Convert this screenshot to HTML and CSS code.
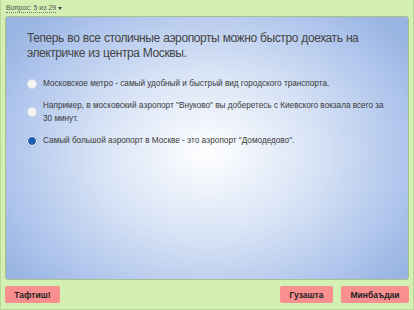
FILE: index.html
```html
<!DOCTYPE html>
<html lang="ru">
<head>
<meta charset="utf-8">
<link rel="stylesheet" href="styles.css">
</head>
<body>
<div class="app">
  <div class="topbar"><span class="qnum">Вопрос: 5 из 29</span><span class="caret"></span></div>
  <div class="panel">
    <div class="question">Теперь во все столичные аэропорты можно быстро доехать на электричке из центра Москвы.</div>
    <div class="options">
      <div class="option"><span class="radio"></span><span class="otext">Московское метро - самый удобный и быстрый вид городского транспорта.</span></div>
      <div class="option"><span class="radio"></span><span class="otext">Например, в московский аэропорт "Внуково" вы доберетесь с Киевского вокзала всего за 30 минут.</span></div>
      <div class="option"><span class="radio checked"></span><span class="otext">Самый большой аэропорт в Москве - это аэропорт "Домодедово".</span></div>
    </div>
  </div>
  <div class="footer">
    <button class="btn btn-check">Тафтиш!</button>
    <div class="spacer"></div>
    <button class="btn btn-prev">Гузашта</button>
    <button class="btn btn-next">Минбаъдаи</button>
  </div>
</div>
</body>
</html>
```

FILE: styles.css
```css
html, body {
  margin: 0;
  padding: 0;
}
body {
  width: 414px;
  height: 310px;
  background: #d3efb2;
  font-family: "Liberation Sans", Arial, sans-serif;
  overflow: hidden;
}
.app {
  box-sizing: border-box;
  width: 414px;
  height: 310px;
  border: 1px solid #b9d99a;
  border-top: none;
  display: flex;
  flex-direction: column;
  padding: 0 4px 0 4px;
}
.topbar {
  height: 16px;
  display: flex;
  align-items: center;
  font-size: 7px;
  color: #555;
  padding-left: 1px;
  gap: 2px;
}
.qnum {
  border-bottom: 1px dotted #777;
  line-height: 8px;
}
.caret {
  width: 0;
  height: 0;
  border-left: 2px solid transparent;
  border-right: 2px solid transparent;
  border-top: 3px solid #444;
}
.panel {
  height: 264px;
  border-radius: 3px;
  background: radial-gradient(ellipse 250px 190px at 50% 52%, #ffffff 0%, #d6e2f5 45%, #afc5ec 80%, #98b4e2 100%);
  border: 1px solid #a9c08e;
  box-sizing: border-box;
  padding: 14px 20px 0 21px;
}
.question {
  font-size: 12px;
  letter-spacing: -0.42px;
  word-spacing: 0.5px;
  line-height: 14.5px;
  color: #444;
  width: 340px;
}
.options {
  margin-top: 17px;
  display: flex;
  flex-direction: column;
  gap: 9px;
}
.option {
  display: flex;
  align-items: center;
  gap: 6px;
}
.radio {
  flex: none;
  width: 10px;
  height: 10px;
  border-radius: 50%;
  background: #f4f4f4;
  box-sizing: border-box;
  border: 1px solid #e0e0e0;
}
.radio.checked {
  background: #1b5fb4;
  border: 1px solid #ffffff;
  box-shadow: 0 0 0 0.5px #9bb0d0;
}
.otext {
  font-size: 8.2px;
  line-height: 13px;
  color: #3a3a3a;
  width: 348px;
}
.footer {
  display: flex;
  align-items: center;
  padding-top: 6px;
  gap: 8px;
}
.spacer {
  flex: 1;
}
.btn {
  height: 17px;
  border: none;
  border-radius: 2px;
  background: #f98f8f;
  font-family: "Liberation Sans", Arial, sans-serif;
  font-weight: bold;
  font-size: 8.5px;
  color: #222;
  padding: 0;
}
.btn-check { width: 55px; }
.btn-prev { width: 53px; }
.btn-next { width: 68px; }
```
